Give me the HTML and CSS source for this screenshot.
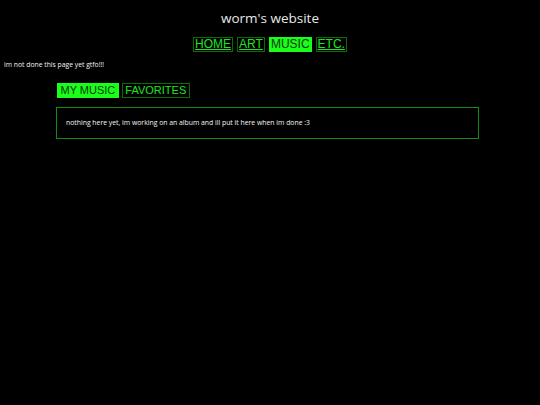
FILE: index.html
```html
<!DOCTYPE html>
<html>
<head>
<meta charset="utf-8">
<link rel="stylesheet" href="styles.css">
</head>
<body>
<h1 class="title">worm's website</h1>
<nav class="nav">
  <a class="btn" href="#">HOME</a>
  <a class="btn" href="#">ART</a>
  <a class="btn active" href="#">MUSIC</a>
  <a class="btn" href="#">ETC.</a>
</nav>
<p class="note">im not done this page yet gtfo!!!</p>
<div class="main">
  <div class="tabs">
    <span class="tab active">MY MUSIC</span>
    <span class="tab">FAVORITES</span>
  </div>
  <div class="panel">nothing here yet, im working on an album and ill put it here when im done :3</div>
</div>
</body>
</html>
```

FILE: styles.css
```css
html, body {
  background: #000;
}
body {
  margin: 0;
  padding: 0 4px;
  color: #e6e6e6;
  font-family: "Open Sans", sans-serif;
}
.title {
  margin: 0;
  padding-top: 9px;
  height: 27px;
  font-size: 13.5px;
  font-weight: 400;
  text-align: center;
  color: #e8e8e8;
  line-height: 18px;
}
.nav {
  display: flex;
  justify-content: center;
  gap: 4px;
  padding-top: 1px;
}
.btn {
  display: block;
  border: 1px solid #0b6b0b;
  padding: 0 1px;
  font-family: "Liberation Sans", Arial, sans-serif;
  font-size: 12px;
  line-height: 13px;
  color: #1ee61e;
  text-decoration: underline;
}
.btn.active {
  background: #1aff1a;
  color: #063806;
  text-decoration: none;
  border-color: #1aff1a;
}
.note {
  margin: 8px 0 0;
  font-size: 6.8px;
  line-height: 10px;
  color: #f4f4f4;
}
.main {
  margin: 13px 0 0 52px;
  width: 423px;
}
.tabs {
  display: flex;
  gap: 3px;
  padding-left: 1px;
}
.tab {
  display: block;
  border: 1px solid #0b6b0b;
  padding: 0 2.5px;
  font-family: "Liberation Sans", Arial, sans-serif;
  font-size: 11px;
  line-height: 13px;
  color: #1ee61e;
}
.tab.active {
  background: #1aff1a;
  color: #063806;
  border-color: #1aff1a;
}
.panel {
  margin-top: 9px;
  border: 1px solid #138a13;
  padding: 10px 9px;
  font-size: 6.85px;
  line-height: 10px;
  color: #f4f4f4;
}
```
